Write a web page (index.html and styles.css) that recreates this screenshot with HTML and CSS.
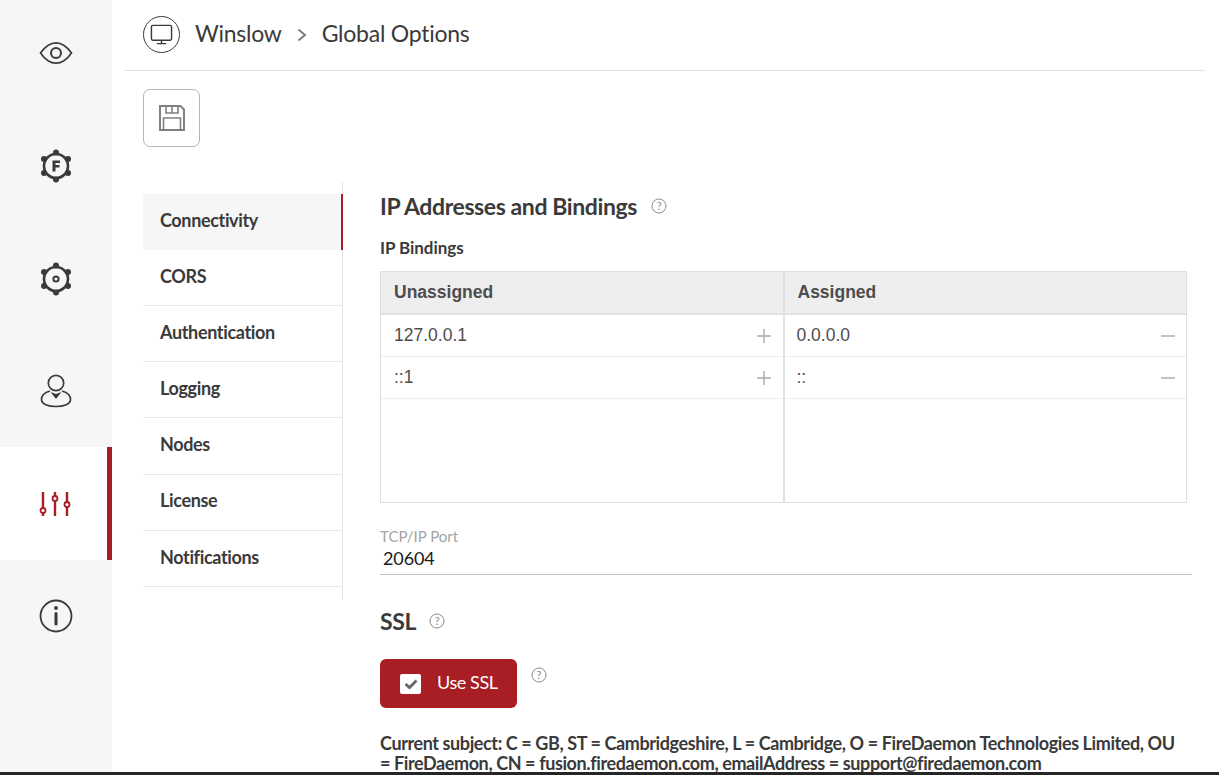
FILE: index.html
```html
<!DOCTYPE html>
<html lang="en">
<head>
<meta charset="utf-8">
<title>Global Options</title>
<link rel="stylesheet" href="styles.css">
</head>
<body>
<div class="app">
  <aside class="rail">
    <a class="rail-item">
      <svg class="rail-icon" viewBox="0 0 34 24" width="34" height="24"><path d="M1.500 12C6 5.500 11 1.800 17 1.800S28 5.500 32.500 12C28 18.500 23 22.200 17 22.200S6 18.500 1.500 12Z" fill="none" stroke="#3a3a3a" stroke-width="1.700"/><circle cx="17" cy="12" r="5" fill="none" stroke="#3a3a3a" stroke-width="2"/></svg>
    </a>
    <a class="rail-item">
      <svg class="rail-icon" viewBox="0 0 34 34" width="34" height="34"><circle cx="17" cy="17" r="12" fill="none" stroke="#3a3a3a" stroke-width="2.600"/><g fill="#3a3a3a"><circle cx="17" cy="3.500" r="3"/><circle cx="17" cy="30.500" r="3"/><circle cx="5" cy="10" r="3"/><circle cx="29" cy="10" r="3"/><circle cx="5" cy="24" r="3"/><circle cx="29" cy="24" r="3"/></g><path d="M13.500 22.500V11.500H21V14H16.500V16H20.500V18.500H16.500V22.500Z" fill="#3a3a3a"/></svg>
    </a>
    <a class="rail-item">
      <svg class="rail-icon rail-icon-low" viewBox="0 0 34 34" width="34" height="34"><circle cx="17" cy="17" r="12" fill="none" stroke="#3a3a3a" stroke-width="2.600"/><g fill="#3a3a3a"><circle cx="17" cy="3.500" r="3"/><circle cx="17" cy="30.500" r="3"/><circle cx="5" cy="10" r="3"/><circle cx="29" cy="10" r="3"/><circle cx="5" cy="24" r="3"/><circle cx="29" cy="24" r="3"/></g><circle cx="17" cy="17" r="2.600" fill="none" stroke="#3a3a3a" stroke-width="2"/></svg>
    </a>
    <a class="rail-item">
      <svg class="rail-icon" viewBox="0 0 32 34" width="32" height="34"><circle cx="16" cy="9" r="7.700" fill="none" stroke="#3a3a3a" stroke-width="1.700"/><path d="M10 17C5 18.500 1.500 21 1.500 25.500 1.500 30 8 32.500 16 32.500S30.500 30 30.500 25.500C30.500 21 27 18.500 22 17" fill="none" stroke="#3a3a3a" stroke-width="1.700"/><path d="M10.500 18L16 20 21.500 18 16 25Z" fill="#3a3a3a"/></svg>
    </a>
    <a class="rail-item rail-item-active">
      <svg class="rail-icon" viewBox="0 0 32 26" width="32" height="26"><g stroke="#a81e24" stroke-width="2.400" fill="#fff"><path d="M4 1V25M16 1V25M28 1V25" fill="none"/><circle cx="4" cy="19.500" r="2.500" stroke-width="1.800"/><circle cx="16" cy="7.500" r="2.500" stroke-width="1.800"/><circle cx="28" cy="13.500" r="2.500" stroke-width="1.800"/></g></svg>
    </a>
    <a class="rail-item">
      <svg class="rail-icon" viewBox="0 0 34 34" width="34" height="34"><circle cx="17" cy="17" r="15.500" fill="none" stroke="#3a3a3a" stroke-width="1.800"/><circle cx="17" cy="9" r="1.900" fill="#3a3a3a"/><path d="M17 14.500V25" stroke="#3a3a3a" stroke-width="3" stroke-linecap="round"/></svg>
    </a>
  </aside>
  <main class="main">
    <header class="crumbs">
      <span class="crumb-badge">
        <svg viewBox="0 0 24 24" width="23" height="23"><rect x="1.500" y="2.500" width="21" height="15.500" rx="1.500" fill="none" stroke="#3a3a3a" stroke-width="1.500"/><path d="M12 18V21M7 21.500H17" stroke="#3a3a3a" stroke-width="1.500"/></svg>
      </span>
      <span class="crumb">Winslow</span>
      <svg class="crumb-sep" viewBox="0 0 10 14" width="10" height="14"><path d="M1.500 1.500L8 7 1.500 12.500" fill="none" stroke="#777" stroke-width="1.800"/></svg>
      <span class="crumb">Global Options</span>
    </header>
    <div class="toolbar">
      <button class="save-btn" type="button" aria-label="Save">
        <svg viewBox="0 0 26 26" width="26" height="26"><path d="M1 1H21.500L25 4.500V25H1Z" fill="none" stroke="#808080" stroke-width="2"/><path d="M7 1.500V8H19V1.500M13 2V7.500M4.500 25V13H21.500V25" fill="none" stroke="#808080" stroke-width="1.600"/></svg>
      </button>
    </div>
    <div class="content">
      <nav class="tabs">
        <a class="tab tab-active">Connectivity</a>
        <a class="tab">CORS</a>
        <a class="tab">Authentication</a>
        <a class="tab">Logging</a>
        <a class="tab">Nodes</a>
        <a class="tab">License</a>
        <a class="tab">Notifications</a>
      </nav>
      <section class="panel">
        <h2 class="title">IP Addresses and Bindings <span class="help"><svg viewBox="0 0 16 16" width="16" height="16"><circle cx="8" cy="8" r="7" fill="none" stroke="#8a8a8a"/><text x="8" y="11.500" class="help-mark">?</text></svg></span></h2>
        <h3 class="subtitle">IP Bindings</h3>
        <div class="bindings">
          <div class="col">
            <div class="col-head">Unassigned</div>
            <div class="row"><span>127.0.0.1</span><svg class="row-icon" viewBox="0 0 14 14" width="14" height="14"><path d="M7 0V14M0 7H14" stroke="#aaa" stroke-width="1.400"/></svg></div>
            <div class="row"><span>::1</span><svg class="row-icon" viewBox="0 0 14 14" width="14" height="14"><path d="M7 0V14M0 7H14" stroke="#aaa" stroke-width="1.400"/></svg></div>
          </div>
          <div class="col col-assigned">
            <div class="col-head">Assigned</div>
            <div class="row"><span>0.0.0.0</span><svg class="row-icon" viewBox="0 0 14 14" width="14" height="14"><path d="M0 7H14" stroke="#aaa" stroke-width="1.400"/></svg></div>
            <div class="row"><span>::</span><svg class="row-icon" viewBox="0 0 14 14" width="14" height="14"><path d="M0 7H14" stroke="#aaa" stroke-width="1.400"/></svg></div>
          </div>
        </div>
        <div class="field">
          <label class="field-label">TCP/IP Port</label>
          <div class="field-value">20604</div>
        </div>
        <h2 class="title title-ssl">SSL <span class="help"><svg viewBox="0 0 16 16" width="16" height="16"><circle cx="8" cy="8" r="7" fill="none" stroke="#8a8a8a"/><text x="8" y="11.500" class="help-mark">?</text></svg></span></h2>
        <div class="ssl-row">
          <button class="ssl-btn" type="button">
            <span class="check"><svg viewBox="0 0 14 12" width="14" height="12"><path d="M1.500 6L5.500 9.500 12.500 2.500" fill="none" stroke="#666" stroke-width="2.800"/></svg></span>
            <span class="ssl-label">Use SSL</span>
          </button>
          <span class="help help-btn"><svg viewBox="0 0 16 16" width="16" height="16"><circle cx="8" cy="8" r="7" fill="none" stroke="#8a8a8a"/><text x="8" y="11.500" class="help-mark">?</text></svg></span>
        </div>
        <p class="subject">Current subject: C = GB, ST = Cambridgeshire, L = Cambridge, O = FireDaemon Technologies Limited, OU = FireDaemon, CN = fusion.firedaemon.com, emailAddress = support@firedaemon.com</p>
      </section>
    </div>
  </main>
</div>
<div class="bottom-edge"></div>
</body>
</html>
```

FILE: styles.css
```css
* { box-sizing: border-box; }
html, body { margin: 0; height: 775px; overflow: hidden; background: #fff; }
body { font-family: Lato, sans-serif; color: #3a3a3a; position: relative; }
.app { display: flex; height: 775px; overflow: hidden; }

.rail { width: 112px; flex: none; background: #f6f6f6; margin-top: -3px; }
.rail-item { display: flex; height: 112.600px; align-items: center; justify-content: center; }
.rail-item-active { background: #fff; border-right: 5px solid #a81e24; padding-left: 3px; }
.rail-icon-low { margin-top: 1px; }

.main { flex: 1; min-width: 0; padding: 0 14px 0 12px; }
.crumbs { display: flex; align-items: center; height: 71px; padding: 0 0 2px 19px; border-bottom: 1px solid #e2e2e2; font-size: 23px; letter-spacing: -0.25px; }
.crumb { margin-bottom: 2px; }
.crumb-badge { width: 37px; height: 37px; border: 1.500px solid #3a3a3a; border-radius: 50%; display: flex; align-items: center; justify-content: center; margin-right: 15px; }
.crumb-sep { margin: 2px 15px 0 15px; }

.toolbar { padding: 18px 0 0 19px; height: 111px; }
.save-btn { width: 57px; height: 58px; background: #fff; border: 1px solid #b5b5b5; border-radius: 7px; padding: 0; display: flex; align-items: center; justify-content: center; }

.content { display: flex; padding-left: 19px; }
.tabs { width: 200px; flex: none; height: 418px; padding-top: 11.600px; border-right: 1px solid #e2e2e2; display: flex; flex-direction: column; }
.tab { height: 56.200px; padding: 0 0 3.500px 17px; display: flex; align-items: center; font-size: 18px; font-weight: 700; letter-spacing: -0.35px; border-bottom: 1px solid #e6e6e6; margin-right: -1px; color: #3a3a3a; }
.tab-active { background: #f6f6f6; border-bottom: 0; border-right: 2px solid #a81e24; }

.panel { flex: 1; min-width: 0; padding-left: 37px; padding-right: 13px; }
.title { font-size: 23px; font-weight: 700; letter-spacing: -0.4px; margin: 9px 0 0; line-height: 30px; display: flex; align-items: center; }
.help { display: inline-flex; margin-left: 14px; }
.help-mark { font: 11px Lato, sans-serif; fill: #8a8a8a; text-anchor: middle; }
.subtitle { font-size: 17px; font-weight: 700; letter-spacing: -0.05px; margin: 17px 0 0; line-height: 20px; }

.bindings { display: flex; margin: 13px 0 0; width: 807px; height: 232px; border: 1px solid #e0e0e0; }
.col { flex: 1; }
.col + .col { border-left: 2px solid #e2e2e2; }
.col-head { height: 43px; background: #eee; border-bottom: 2px solid #e2e2e2; padding: 0 13px 1px; display: flex; align-items: center; font: 700 17.500px "Liberation Sans", sans-serif; color: #4d4d4d; }
.row { height: 42px; padding: 0 12px 0 13px; border-bottom: 1px solid #eee; display: flex; align-items: center; justify-content: space-between; font: 17.500px "Liberation Sans", sans-serif; color: #4d4d4d; }
.col-assigned .row { padding: 0 11px 0 12px; }

.field { margin-top: 25px; border-bottom: 1px solid #c4c4c4; height: 47px; }
.field-label { display: block; font-size: 15px; line-height: 17px; color: #a3a3a3; }
.field-value { font-size: 18px; line-height: 26px; padding-left: 3px; color: #1a1a1a; letter-spacing: -0.1px; }

.title-ssl { margin-top: 31px; }
.title-ssl .help { margin-left: 13px; }
.ssl-row { display: flex; margin-top: 23px; }
.ssl-btn { width: 137px; height: 49px; background: #a81e24; border: 0; border-radius: 6px; color: #fff; font: 18px Lato, sans-serif; letter-spacing: -0.4px; display: flex; align-items: center; padding: 0 0 0 20px; gap: 16px; }
.ssl-label { margin-bottom: 3px; }
.check { width: 21px; height: 20px; background: #fff; border-radius: 2px; display: flex; align-items: center; justify-content: center; }
.help-btn { margin-left: 14px; margin-top: 8px; align-self: flex-start; }
.subject { margin: 25px 0 0; font-size: 18px; font-weight: 700; letter-spacing: -0.4px; line-height: 20px; width: 802px; }

.bottom-edge { position: absolute; left: 0; right: 0; bottom: 0; height: 3px; background: #262626; }
```
